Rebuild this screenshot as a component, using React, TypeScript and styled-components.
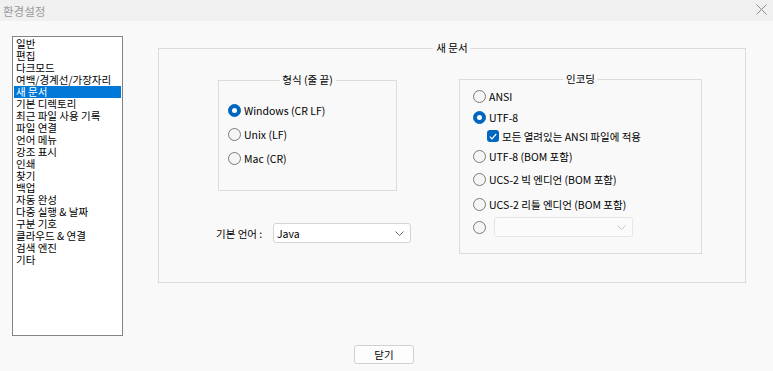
import styled, { createGlobalStyle } from "styled-components";
import { FC } from "react";

const GlobalStyle = createGlobalStyle`
  html, body {
    margin: 0;
    padding: 0;
    background: #f9f9f9;
  }

  body {
    font-family: "Noto Sans CJK KR", "Noto Sans", sans-serif;
    font-size: 10.5px;
    color: #000;
  }
`;

const categories = [
  "일반",
  "편집",
  "다크모드",
  "여백/경계선/가장자리",
  "새 문서",
  "기본 디렉토리",
  "최근 파일 사용 기록",
  "파일 연결",
  "언어 메뉴",
  "강조 표시",
  "인쇄",
  "찾기",
  "백업",
  "자동 완성",
  "다중 실행 & 날짜",
  "구분 기호",
  "클라우드 & 연결",
  "검색 엔진",
  "기타",
];

const Window = styled.div`
  width: 773px;
  height: 371px;
  display: flex;
  flex-direction: column;
  background: #f9f9f9;
  overflow: hidden;
`;

const TitleBar = styled.div`
  height: 21px;
  flex: none;
  display: flex;
  align-items: center;
  justify-content: space-between;
  padding: 0 6px 0 3px;
  background: #f0f0f0;
  color: #999;
  font-size: 11.5px;
`;

const CloseIcon = styled.svg`
  width: 11px;
  height: 11px;
  margin-top: -3px;
`;

const Main = styled.div`
  display: flex;
  align-items: flex-start;
  padding: 15px 0 0 12px;
`;

const ListBox = styled.div`
  width: 111px;
  height: 300px;
  box-sizing: border-box;
  border: 1px solid #848484;
  background: #fff;
  padding: 1px;
  display: flex;
  flex-direction: column;
`;

const ListItem = styled.div<{ $selected?: boolean }>`
  height: 12px;
  line-height: 12px;
  padding-left: 2px;
  white-space: nowrap;
  background: ${(p) => (p.$selected ? "#0078d7" : "transparent")};
  color: ${(p) => (p.$selected ? "#fff" : "#000")};
`;

const Group = styled.div<{ $width: number; $height: number }>`
  position: relative;
  box-sizing: border-box;
  width: ${(p) => p.$width}px;
  height: ${(p) => p.$height}px;
  border: 1px solid #dcdcdc;
`;

const GroupTitle = styled.span`
  position: absolute;
  top: -8px;
  left: 50%;
  transform: translateX(-50%);
  padding: 0 3px;
  background: #f9f9f9;
  line-height: 14px;
  white-space: nowrap;
`;

const OuterGroup = styled(Group)`
  margin: 12px 0 0 35px;
  display: flex;
  gap: 48px;
  padding: 31px 0 0 57px;
`;

const LeftColumn = styled.div`
  width: 195px;
  display: flex;
  flex-direction: column;
`;

const LineGroup = styled(Group)`
  margin: 0 0 0 2px;
  padding: 17px 0 0 9px;
  display: flex;
  flex-direction: column;
`;

const EncodingGroup = styled(Group)`
  margin-top: -1px;
  padding: 6px 0 0 13px;
  display: flex;
  flex-direction: column;
`;

const OptionRow = styled.div<{ $height: number; $indent?: number }>`
  height: ${(p) => p.$height}px;
  display: flex;
  align-items: center;
  gap: 3px;
  padding-left: ${(p) => p.$indent ?? 0}px;
  white-space: nowrap;
`;

const RadioCircle = styled.span<{ $checked?: boolean }>`
  flex: none;
  box-sizing: border-box;
  width: 13px;
  height: 13px;
  border-radius: 50%;
  display: flex;
  align-items: center;
  justify-content: center;
  border: 1px solid ${(p) => (p.$checked ? "#0067c0" : "#7a7a7a")};
  background: ${(p) => (p.$checked ? "#0067c0" : "#f5f5f5")};

  &::after {
    content: "";
    display: ${(p) => (p.$checked ? "block" : "none")};
    width: 5px;
    height: 5px;
    border-radius: 50%;
    background: #fff;
  }
`;

const CheckBox = styled.span`
  flex: none;
  width: 12px;
  height: 12px;
  border-radius: 3px;
  background: #0067c0;
  display: flex;
  align-items: center;
  justify-content: center;
`;

const LanguageRow = styled.div`
  margin-top: 32px;
  display: flex;
  align-items: center;
`;

const FieldLabel = styled.span`
  width: 57px;
  white-space: nowrap;
`;

const Combo = styled.div<{ $width: number; $disabled?: boolean }>`
  box-sizing: border-box;
  width: ${(p) => p.$width}px;
  height: 20px;
  border: 1px solid ${(p) => (p.$disabled ? "#e6e6e6" : "#d4d4d4")};
  border-radius: 3px;
  background: ${(p) => (p.$disabled ? "#fbfbfb" : "#fff")};
  display: flex;
  align-items: center;
  justify-content: space-between;
  padding: 0 6px 0 3px;
`;

const Chevron = styled.svg<{ $disabled?: boolean }>`
  width: 9px;
  height: 5px;
  stroke: ${(p) => (p.$disabled ? "#c4c4c4" : "#6a6a6a")};
`;

const Footer = styled.div`
  display: flex;
  justify-content: center;
  padding: 9px 5px 0 0;
`;

const Button = styled.button`
  width: 60px;
  height: 19px;
  padding: 0;
  font: inherit;
  color: #000;
  background: #fdfdfd;
  border: 1px solid #d0d0d0;
  border-radius: 3px;
`;

const Radio: FC<{ label: string; checked?: boolean; height: number }> = ({
  label,
  checked,
  height,
}) => (
  <OptionRow $height={height}>
    <RadioCircle $checked={checked} />
    <span>{label}</span>
  </OptionRow>
);

const ComboArrow: FC<{ disabled?: boolean }> = ({ disabled }) => (
  <Chevron viewBox="0 0 9 5" fill="none" strokeWidth="1" $disabled={disabled}>
    <path d="M0.5 0.5 L4.5 4.5 L8.5 0.5" />
  </Chevron>
);

export default function App() {
  return (
    <>
      <GlobalStyle />
      <Window>
        <TitleBar>
          <span>환경설정</span>
          <CloseIcon viewBox="0 0 11 11" fill="none" stroke="#8c8c8c" strokeWidth="1">
            <path d="M0.5 0.5 L10.5 10.5 M10.5 0.5 L0.5 10.5" />
          </CloseIcon>
        </TitleBar>
        <Main>
          <ListBox>
            {categories.map((c) => (
              <ListItem key={c} $selected={c === "새 문서"}>
                {c}
              </ListItem>
            ))}
          </ListBox>
          <OuterGroup $width={588} $height={235}>
            <GroupTitle>새 문서</GroupTitle>
            <LeftColumn>
              <LineGroup $width={179} $height={111}>
                <GroupTitle>형식 (줄 끝)</GroupTitle>
                <Radio label="Windows (CR LF)" checked height={24} />
                <Radio label="Unix (LF)" height={24} />
                <Radio label="Mac (CR)" height={24} />
              </LineGroup>
              <LanguageRow>
                <FieldLabel>기본 언어 :</FieldLabel>
                <Combo $width={138}>
                  <span>Java</span>
                  <ComboArrow />
                </Combo>
              </LanguageRow>
            </LeftColumn>
            <EncodingGroup $width={243} $height={175}>
              <GroupTitle>인코딩</GroupTitle>
              <Radio label="ANSI" height={21} />
              <Radio label="UTF-8" checked height={20} />
              <OptionRow $height={18} $indent={14}>
                <CheckBox>
                  <svg width="8" height="7" viewBox="0 0 8 7" fill="none" stroke="#fff" strokeWidth="1.2">
                    <path d="M0.8 3.6 L3 5.8 L7.2 1" />
                  </svg>
                </CheckBox>
                <span>모든 열려있는 ANSI 파일에 적용</span>
              </OptionRow>
              <Radio label="UTF-8 (BOM 포함)" height={22} />
              <Radio label="UCS-2 빅 엔디언 (BOM 포함)" height={25} />
              <Radio label="UCS-2 리틀 엔디언 (BOM 포함)" height={24} />
              <OptionRow $height={22}>
                <RadioCircle />
                <Combo $width={139} $disabled style={{ marginLeft: 5 }}>
                  <span />
                  <ComboArrow disabled />
                </Combo>
              </OptionRow>
            </EncodingGroup>
          </OuterGroup>
        </Main>
        <Footer>
          <Button>닫기</Button>
        </Footer>
      </Window>
    </>
  );
}
